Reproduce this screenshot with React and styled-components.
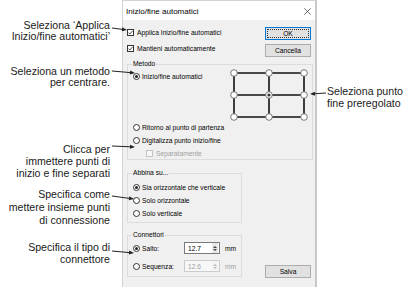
import React from 'react';
import styled, { createGlobalStyle } from 'styled-components';

const Global = createGlobalStyle`
  html, body { margin: 0; padding: 0; background: #fff; }
  #root { width: 418px; height: 300px; }
  * { box-sizing: border-box; }
`;

const Page = styled.div`
  position: relative;
  width: 418px;
  height: 300px;
  overflow: hidden;
  padding-left: 122px;
  font-family: "Liberation Sans", Arial, sans-serif;
`;

const Dialog = styled.div`
  width: 195px;
  height: 287px;
  display: flex;
  flex-direction: column;
  border: 1px solid #d4d4d4;
  border-right: 2px solid #c8c8c8;
  border-bottom: none;
  background: #f0f0f0;
  font-size: 6.7px;
  color: #000;
`;

const TitleBar = styled.div`
  height: 19px;
  flex: none;
  background: #fff;
  display: flex;
  align-items: center;
  justify-content: space-between;
  padding: 1px 4px 0 3px;
`;

const Title = styled.span`
  font-size: 8px;
  color: #000;
`;

const Close = styled.svg`
  width: 7px;
  height: 7px;
  display: block;
`;

const Body = styled.div`
  flex: 1;
  display: flex;
  flex-direction: column;
  padding: 0 2px 0 4px;
`;

const TopSection = styled.div`
  height: 39px;
  display: flex;
  justify-content: space-between;
`;

const Column = styled.div`
  display: flex;
  flex-direction: column;
  gap: ${p => p.$gap || 0}px;
  padding-top: ${p => p.$pt || 0}px;
  margin-right: ${p => p.$mr || 0}px;
`;

const Row = styled.div`
  height: ${p => p.$h || 10}px;
  display: flex;
  align-items: center;
  padding-left: ${p => p.$pl || 0}px;
  margin-top: ${p => p.$mt || 0}px;
  color: ${p => (p.$disabled ? '#a0a0a0' : '#000')};
  white-space: nowrap;
`;

const Box = styled.span`
  width: 7px;
  height: 7px;
  flex: none;
  border: 1px solid ${p => (p.$disabled ? '#c4c4c4' : '#333')};
  background: ${p => (p.$disabled ? '#f7f7f7' : '#fff')};
  margin-right: 3px;
  display: flex;
  align-items: center;
  justify-content: center;
`;

const RadioDot = styled.span`
  width: 7px;
  height: 7px;
  flex: none;
  border-radius: 50%;
  border: 1px solid #333;
  background: #fff;
  margin-right: 2px;
  display: flex;
  align-items: center;
  justify-content: center;
  &::after {
    content: '';
    width: 3px;
    height: 3px;
    border-radius: 50%;
    background: ${p => (p.$checked ? '#222' : 'transparent')};
  }
`;

const Button = styled.div`
  width: 46px;
  height: 13px;
  background: #e1e1e1;
  border: 1px solid ${p => (p.$default ? '#0078d7' : '#adadad')};
  display: flex;
  align-items: center;
  justify-content: center;
  position: relative;
  margin-bottom: ${p => p.$mb || 0}px;
  margin-right: 2px;
  ${p =>
    p.$default &&
    `&::before { content: ''; position: absolute; inset: 1px; border: 1px dotted #333; }`}
`;

const Group = styled.fieldset`
  margin: ${p => p.$mt || 0}px 0 0 0;
  padding: 0;
  border: 1px solid #dcdcdc;
  min-width: 0;
  width: ${p => (p.$w ? `${p.$w}px` : 'auto')};
`;

const Legend = styled.legend`
  margin-left: 4px;
  padding: 0 1px;
  line-height: 10px;
  font-size: 6.7px;
`;

const GroupBody = styled.div`
  display: flex;
  flex-direction: column;
  gap: ${p => p.$gap || 3}px;
  padding: ${p => p.$pt || 0}px 0 ${p => p.$pb || 0}px 5px;
`;

const MethodTop = styled.div`
  height: 52px;
  display: flex;
  justify-content: space-between;
  align-items: flex-start;
  padding-right: 4px;
`;

const Grid = styled.svg`
  width: 78px;
  height: 52px;
  display: block;
`;

const BottomSection = styled.div`
  margin-top: 8px;
  display: flex;
  justify-content: space-between;
  align-items: flex-end;
`;

const RadioLabel = styled.span`
  width: 42px;
`;

const Spin = styled.div`
  width: 36px;
  height: 12px;
  border: 1px solid ${p => (p.$disabled ? '#cccccc' : '#7a7a7a')};
  background: ${p => (p.$disabled ? '#f7f7f7' : '#fff')};
  color: ${p => (p.$disabled ? '#a0a0a0' : '#000')};
  display: flex;
  align-items: center;
  justify-content: space-between;
  padding-left: 3px;
`;

const SpinArrows = styled.div`
  width: 6px;
  height: 10px;
  margin-right: 1px;
  background: ${p => (p.$disabled ? '#f4f4f4' : '#e8e8e8')};
  display: flex;
  flex-direction: column;
  align-items: center;
  justify-content: center;
  gap: 1px;
`;

const Tri = styled.span`
  width: 0;
  height: 0;
  border-left: 2px solid transparent;
  border-right: 2px solid transparent;
  ${p =>
    p.$up
      ? `border-bottom: 2px solid ${p.$disabled ? '#bbb' : '#444'};`
      : `border-top: 2px solid ${p.$disabled ? '#bbb' : '#444'};`}
`;

const Unit = styled.span`
  margin-left: 5px;
`;

const Callout = styled.div`
  position: absolute;
  top: ${p => p.$top}px;
  ${p => (p.$right != null ? `right: ${p.$right}px; text-align: right;` : `left: ${p.$left}px;`)}
  font-size: 10.6px;
  line-height: ${p => p.$lh || 12}px;
  color: #1a1a1a;
  white-space: nowrap;
`;

const Overlay = styled.svg`
  position: absolute;
  left: 0;
  top: 0;
  width: 418px;
  height: 300px;
  pointer-events: none;
`;

const Check = ({ checked, disabled, children, pl }) => (
  <Row $pl={pl} $disabled={disabled}>
    <Box $disabled={disabled}>
      {checked && (
        <svg width="5" height="5" viewBox="0 0 5 5">
          <path d="M0.4 2.6 L1.9 4.1 L4.6 0.8" fill="none" stroke="#222" strokeWidth="0.8" />
        </svg>
      )}
    </Box>
    {children}
  </Row>
);

const Radio = ({ checked, children, mt }) => (
  <Row $mt={mt}>
    <RadioDot $checked={checked} />
    {children}
  </Row>
);

const SpinBox = ({ value, disabled }) => (
  <Spin $disabled={disabled}>
    <span>{value}</span>
    <SpinArrows $disabled={disabled}>
      <Tri $up $disabled={disabled} />
      <Tri $disabled={disabled} />
    </SpinArrows>
  </Spin>
);

const xs = [4, 39, 74];
const ys = [4, 26, 48];

const PresetGrid = () => (
  <Grid viewBox="0 0 78 52">
    {ys.map(y => (
      <line key={`h${y}`} x1={4} y1={y} x2={74} y2={y} stroke="#111" strokeWidth="1.6" />
    ))}
    {xs.map(x => (
      <line key={`v${x}`} x1={x} y1={4} x2={x} y2={48} stroke="#111" strokeWidth="1.6" />
    ))}
    {ys.map(y =>
      xs.map(x => (
        <circle key={`${x}-${y}`} cx={x} cy={y} r="3.3" fill="#fff" stroke="#6a6a6a" strokeWidth="0.9" />
      ))
    )}
    <circle cx={39} cy={26} r="1.6" fill="#333" />
  </Grid>
);

const arrows = [
  [112, 28, 127, 30],
  [112, 71, 135, 73],
  [326, 93, 310, 94],
  [112, 146, 135, 147],
  [112, 196, 134, 199],
  [112, 251, 134, 253],
];

const Arrow = ({ a }) => {
  const [x1, y1, x2, y2] = a;
  const dx = x2 - x1;
  const dy = y2 - y1;
  const len = Math.hypot(dx, dy);
  const ux = dx / len;
  const uy = dy / len;
  const hl = 5;
  const hw = 2;
  const bx = x2 - ux * hl;
  const by = y2 - uy * hl;
  const px = -uy * hw;
  const py = ux * hw;
  return (
    <g>
      <line x1={x1} y1={y1} x2={bx} y2={by} stroke="#222" strokeWidth="1" />
      <polygon points={`${x2},${y2} ${bx + px},${by + py} ${bx - px},${by - py}`} fill="#222" />
    </g>
  );
};

export default function App() {
  return (
    <>
      <Global />
      <Page>
        <Dialog>
          <TitleBar>
            <Title>Inizio/fine automatici</Title>
            <Close viewBox="0 0 7 7">
              <path d="M0.3 0.3 L6.7 6.7 M6.7 0.3 L0.3 6.7" stroke="#333" strokeWidth="0.7" />
            </Close>
          </TitleBar>
          <Body>
            <TopSection>
              <Column $pt={7} $gap={6}>
                <Check checked>Applica Inizio/fine automatici</Check>
                <Check checked>Mantieni automaticamente</Check>
              </Column>
              <Column $pt={7} $gap={4}>
                <Button $default>OK</Button>
                <Button>Cancella</Button>
              </Column>
            </TopSection>

            <Group>
              <Legend>Metodo</Legend>
              <GroupBody $gap={3} $pb={1}>
                <MethodTop>
                  <Radio checked mt={2}>Inizio/fine automatici</Radio>
                  <PresetGrid />
                </MethodTop>
                <Radio mt={-2}>Ritorno al punto di partenza</Radio>
                <Radio>Digitalizza punto inizio/fine</Radio>
                <Check disabled pl={13}>Separatamente</Check>
              </GroupBody>
            </Group>

            <BottomSection>
              <Column>
                <Group $w={115}>
                  <Legend>Abbina su...</Legend>
                  <GroupBody $pt={4} $pb={4} $gap={3}>
                    <Radio checked>Sia orizzontale che verticale</Radio>
                    <Radio>Solo orizzontale</Radio>
                    <Radio>Solo verticale</Radio>
                  </GroupBody>
                </Group>
                <Group $w={115} $mt={7}>
                  <Legend>Connettori</Legend>
                  <GroupBody $pt={2} $pb={4} $gap={6}>
                    <Row $h={12}>
                      <RadioDot $checked />
                      <RadioLabel>Salto:</RadioLabel>
                      <SpinBox value="12.7" />
                      <Unit>mm</Unit>
                    </Row>
                    <Row $h={12}>
                      <RadioDot />
                      <RadioLabel>Sequenza:</RadioLabel>
                      <SpinBox value="12.6" disabled />
                      <Unit style={{ color: '#a0a0a0' }}>mm</Unit>
                    </Row>
                  </GroupBody>
                </Group>
              </Column>
              <Button $mb={-1}>Salva</Button>
            </BottomSection>
          </Body>
        </Dialog>

        <Callout $top={19.5} $right={308} $lh={11}>
          Seleziona ‘Applica<br />Inizio/fine automatici’
        </Callout>
        <Callout $top={65.5} $right={308} $lh={11}>
          Seleziona un metodo<br />per centrare.
        </Callout>
        <Callout $top={85} $left={327}>
          Seleziona punto<br />fine preregolato
        </Callout>
        <Callout $top={143} $right={308}>
          Clicca per<br />immettere punti di<br />inizio e fine separati
        </Callout>
        <Callout $top={187.5} $right={308} $lh={13}>
          Specifica come<br />mettere insieme punti<br />di connessione
        </Callout>
        <Callout $top={241} $right={308}>
          Specifica il tipo di<br />connettore
        </Callout>

        <Overlay viewBox="0 0 418 300">
          {arrows.map((a, i) => (
            <Arrow key={i} a={a} />
          ))}
        </Overlay>
      </Page>
    </>
  );
}
